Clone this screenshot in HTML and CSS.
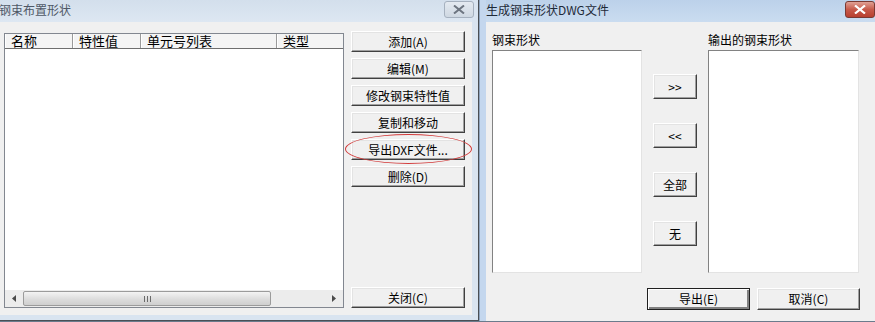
FILE: index.html
```html
<!DOCTYPE html>
<html lang="zh-CN">
<head>
    <meta charset="UTF-8">
    <title>钢束布置形状</title>
    <link rel="stylesheet" href="styles.css">
</head>
<body>
    <!-- Left dialog: tendon layout shapes -->
    <div class="window inactive">
        <div class="titlebar">
            <span class="title">钢束布置形状</span>
            <span class="close-btn">
                <svg width="12" height="9" viewBox="0 0 12 9"><path d="M1 0.5 L11 8.5 M11 0.5 L1 8.5" stroke="#6d7580" stroke-width="2"/></svg>
            </span>
        </div>
        <div class="client left-client">
            <div class="listview">
                <div class="lv-header">
                    <div class="lv-col col-name">名称</div>
                    <div class="lv-col col-prop">特性值</div>
                    <div class="lv-col col-units">单元号列表</div>
                    <div class="lv-col col-type">类型</div>
                </div>
                <div class="lv-body"></div>
                <div class="hscroll">
                    <span class="arrow">
                        <svg width="4" height="7" viewBox="0 0 4 7"><path d="M4 0 L0 3.5 L4 7 Z" fill="#4a4a4a"/></svg>
                    </span>
                    <span class="thumb">
                        <span class="grip"></span>
                    </span>
                    <span class="track"></span>
                    <span class="arrow">
                        <svg width="4" height="7" viewBox="0 0 4 7"><path d="M0 0 L4 3.5 L0 7 Z" fill="#4a4a4a"/></svg>
                    </span>
                </div>
            </div>
            <div class="side-buttons">
                <button class="btn">添加(A)</button>
                <button class="btn">编辑(M)</button>
                <button class="btn">修改钢束特性值</button>
                <button class="btn">复制和移动</button>
                <div class="marked">
                    <button class="btn">导出DXF文件...</button>
                    <span class="ring"></span>
                </div>
                <button class="btn">删除(D)</button>
                <div class="spacer"></div>
                <button class="btn">关闭(C)</button>
            </div>
        </div>
    </div>

    <!-- Right dialog: export DWG -->
    <div class="window active">
        <div class="titlebar">
            <span class="title">生成钢束形状DWG文件</span>
            <span class="close-btn red">
                <svg width="12" height="9" viewBox="0 0 12 9"><path d="M1 0.5 L11 8.5 M11 0.5 L1 8.5" stroke="#ffffff" stroke-width="2.2"/></svg>
            </span>
        </div>
        <div class="client right-client">
            <div class="lists">
                <div class="list-col">
                    <div class="label">钢束形状</div>
                    <div class="listbox"></div>
                </div>
                <div class="move-buttons">
                    <button class="btn small">&gt;&gt;</button>
                    <button class="btn small">&lt;&lt;</button>
                    <button class="btn small">全部</button>
                    <button class="btn small">无</button>
                </div>
                <div class="list-col">
                    <div class="label">输出的钢束形状</div>
                    <div class="listbox"></div>
                </div>
            </div>
            <div class="footer">
                <button class="btn wide default">导出(E)</button>
                <button class="btn wide">取消(C)</button>
            </div>
        </div>
    </div>
</body>
</html>
```

FILE: styles.css
```css
* {
    margin: 0;
    padding: 0;
    box-sizing: border-box;
}

body {
    width: 875px;
    height: 322px;
    overflow: hidden;
    display: flex;
    background: #6b7b8c;
    font-family: "Noto Sans CJK SC", "DejaVu Sans", sans-serif;
    font-size: 12px;
    color: #000;
}

/* Window frame */
.window {
    display: flex;
    flex-direction: column;
    height: 321px;
}

.window.inactive {
    width: 479px;
    background: #d9e4f0;
    border-right: 1px solid #4a4f55;
    border-bottom: 1px solid #4a4f55;
    padding: 0 6px 5px 0;
}

.window.active {
    flex: 1;
    background: #c4d7ee;
    border-left: 1px solid #8ea4bf;
    padding: 0 0 0 6px;
    margin-right: -4px;
}

.titlebar {
    height: 22px;
    display: flex;
    align-items: center;
    justify-content: space-between;
    padding-bottom: 2px;
}

.inactive .titlebar {
    background: linear-gradient(#d3dfec, #dde7f2);
}

.active .titlebar {
    background: linear-gradient(#bcd1ea, #cadcf0);
    padding-right: 0;
}

.title {
    font-size: 12px;
    color: #1e2a38;
    line-height: 16px;
}

.inactive .title {
    margin-left: -1px;
    color: #4e5866;
}

.close-btn {
    width: 30px;
    height: 17px;
    margin-top: -1px;
    display: flex;
    align-items: center;
    justify-content: center;
    border: 1px solid #a6b1bf;
    border-radius: 3px;
    background: linear-gradient(#e4eaf1, #cfd8e2);
    margin-right: -2px;
}

.close-btn.red {
    background: linear-gradient(#e0a195, #c75a4a 50%, #b8402f);
    border-color: #7a3a33;
    margin-right: 4px;
}

.client {
    flex: 1;
    background: #f0f0f0;
}

/* Left dialog content */
.left-client {
    display: flex;
    padding: 11px 7px 7px 4px;
    gap: 7px;
}

.listview {
    width: 340px;
    display: flex;
    flex-direction: column;
    border: 1px solid #828790;
    background: #fff;
}

.lv-header {
    height: 15px;
    display: flex;
    background: #f4f4f4;
    border-bottom: 1px solid #6e6e6e;
}

.lv-col {
    height: 14px;
    line-height: 14px;
    padding-left: 6px;
    font-size: 13px;
    border-right: 1px solid #9a9a9a;
    box-shadow: inset 1px 0 0 #fff;
}

.col-name { width: 68px; }
.col-prop { width: 68px; }
.col-units { width: 136px; }
.col-type { flex: 1; border-right: none; }

.lv-body {
    flex: 1;
}

.hscroll {
    height: 17px;
    display: flex;
    align-items: center;
    background: #ececec;
}

.hscroll .arrow {
    width: 18px;
    display: flex;
    justify-content: center;
}

.hscroll .thumb {
    width: 248px;
    height: 15px;
    border: 1px solid #9b9b9b;
    border-radius: 2px;
    background: linear-gradient(#f3f3f3, #dcdcdc 55%, #cfcfcf);
    display: flex;
    align-items: center;
    justify-content: center;
}

.grip {
    width: 7px;
    height: 6px;
    background: repeating-linear-gradient(90deg, #6a6a6a 0 1px, transparent 1px 3px);
}

.hscroll .track {
    flex: 1;
}

.side-buttons {
    width: 114px;
    display: flex;
    flex-direction: column;
    gap: 6px;
    padding-top: -2px;
    margin-top: -2px;
}

.spacer {
    flex: 1;
}

/* Classic 3D button */
.btn {
    height: 21px;
    font-family: "Noto Sans CJK SC", "DejaVu Sans", sans-serif;
    font-size: 12px;
    line-height: 1;
    color: #000;
    background: #f0f0f0;
    border: 1px solid;
    border-color: #ffffff #404040 #404040 #ffffff;
    box-shadow: inset -1px -1px 0 #a0a0a0, inset 1px 1px 0 #e3e3e3;
    width: 100%;
    cursor: pointer;
}

.marked {
    position: relative;
}

.ring {
    position: absolute;
    left: -6px;
    right: -7px;
    top: -5px;
    bottom: -4px;
    border: 1px solid #d23a3a;
    border-radius: 50%;
    pointer-events: none;
}

/* Right dialog content */
.right-client {
    display: flex;
    flex-direction: column;
    padding: 11px 15px 0 6px;
}

.lists {
    display: flex;
    gap: 11px;
}

.list-col {
    display: flex;
    flex-direction: column;
    width: 150px;
}

.list-col:last-child {
    width: 151px;
}

.label {
    height: 17px;
    font-size: 12px;
    line-height: 14px;
}

.listbox {
    height: 223px;
    background: #fff;
    border: 1px solid;
    border-color: #828282 #e3e3e3 #e3e3e3 #828282;
}

.move-buttons {
    width: 44px;
    display: flex;
    flex-direction: column;
    gap: 24px;
    padding-top: 41px;
}

.btn.small {
    height: 25px;
}

.footer {
    display: flex;
    gap: 7px;
    padding-top: 15px;
    padding-left: 155px;
}

.btn.wide {
    width: 103px;
    height: 22px;
}

.btn.default {
    border: 1px solid #202020;
    box-shadow: inset 1px 1px 0 #fff, inset -2px -2px 0 #808080;
}
```
